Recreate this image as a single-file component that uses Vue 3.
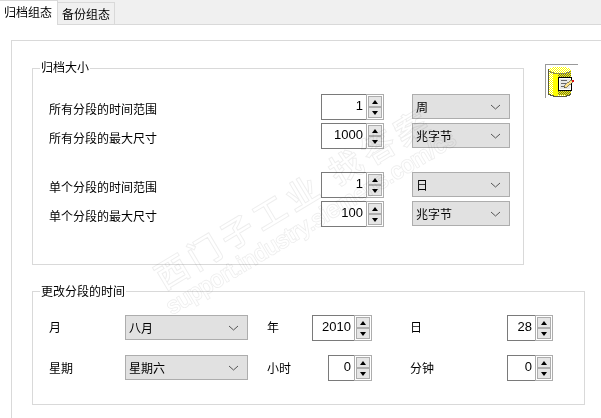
<template>
  <div class="page">
    <div class="tabs">
      <div class="tab active">归档组态</div>
      <div class="tab">备份组态</div>
    </div>

    <div class="panel">
      <div class="top-row">
        <section class="group group-size">
          <span class="legend">归档大小</span>
          <div v-for="(row, i) in sizeRows" :key="i" class="size-row" :class="{ spaced: i === 2 }">
            <span class="size-label">{{ row.label }}</span>
            <div class="spin" :style="{ width: '63px' }">
              <span class="spin-value">{{ row.value }}</span>
              <span class="spin-btns"><i class="up"></i><i class="down"></i></span>
            </div>
            <div class="combo combo-size">
              <span>{{ row.unit }}</span>
              <svg class="chev" width="11" height="6" viewBox="0 0 11 6" fill="none"><path d="M1 1L5.5 5L10 1" stroke="#555" stroke-width="1"/></svg>
            </div>
          </div>
        </section>

        <svg class="db-icon" width="34" height="34" viewBox="0 0 34 34" shape-rendering="crispEdges">
          <defs>
            <pattern id="dither" width="2" height="2" patternUnits="userSpaceOnUse">
              <rect width="2" height="2" fill="#ffff00"/>
              <rect width="1" height="1" fill="#6b6b3a"/>
              <rect x="1" y="1" width="1" height="1" fill="#6b6b3a"/>
            </pattern>
            <pattern id="dither-lt" width="2" height="2" patternUnits="userSpaceOnUse">
              <rect width="2" height="2" fill="#ffff00"/>
              <rect width="1" height="1" fill="#fff"/>
              <rect x="1" y="1" width="1" height="1" fill="#fff"/>
            </pattern>
          </defs>
          <path d="M0.5 34V0.5H33" fill="none" stroke="#9a9a9a" stroke-width="1"/>
          <path d="M3 5H5V4H8V3H21V4H24V5H26V29H24V31H21V32H8V31H5V30H3Z" fill="url(#dither-lt)"/>
          <rect x="8" y="10" width="5" height="22" fill="#ffff00"/>
          <rect x="13" y="9" width="13" height="22" fill="url(#dither)"/>
          <path d="M3 5H5V4H8V3H21V4H24V5H26V7H24V8H21V9H8V8H5V7H3Z" fill="url(#dither-lt)"/>
          <path d="M3 7V29M3 7H5V8H8V9H21V8H24V7H26" fill="none" stroke="#8a8a4a" stroke-width="1"/>
          <path d="M3.5 5V30H5.5V31.5H8.5V32.5H21V31.5H24V30H26" fill="none" stroke="#5a5a40" stroke-width="1"/>
          <rect x="13.5" y="13.5" width="13" height="13" fill="#fff" stroke="#000"/>
          <rect x="15" y="15" width="10" height="10" fill="#e8e8e8"/>
          <path d="M16 16.5H22M16 19.5H21M16 22.5H19" stroke="#666" fill="none"/>
          <path d="M19 24L20 21L26 16L28 18L22 23Z" fill="#ffe28a" stroke="#222" stroke-width="0.5"/>
          <rect x="27" y="16" width="2" height="2" fill="#e01010"/>
        </svg>
      </div>

      <section class="group group-time">
        <span class="legend">更改分段的时间</span>
        <div class="time-row">
          <span class="time-label">月</span>
          <div class="combo combo-time">
            <span>八月</span>
            <svg class="chev" width="11" height="6" viewBox="0 0 11 6" fill="none"><path d="M1 1L5.5 5L10 1" stroke="#555" stroke-width="1"/></svg>
          </div>
          <div class="pair pair-mid">
            <span>年</span>
            <div class="spin" :style="{ width: '60px' }">
              <span class="spin-value">2010</span>
              <span class="spin-btns"><i class="up"></i><i class="down"></i></span>
            </div>
          </div>
          <div class="pair pair-end">
            <span>日</span>
            <div class="spin" :style="{ width: '46px' }">
              <span class="spin-value">28</span>
              <span class="spin-btns"><i class="up"></i><i class="down"></i></span>
            </div>
          </div>
        </div>
        <div class="time-row">
          <span class="time-label">星期</span>
          <div class="combo combo-time">
            <span>星期六</span>
            <svg class="chev" width="11" height="6" viewBox="0 0 11 6" fill="none"><path d="M1 1L5.5 5L10 1" stroke="#555" stroke-width="1"/></svg>
          </div>
          <div class="pair pair-mid">
            <span>小时</span>
            <div class="spin" :style="{ width: '44px' }">
              <span class="spin-value">0</span>
              <span class="spin-btns"><i class="up"></i><i class="down"></i></span>
            </div>
          </div>
          <div class="pair pair-end">
            <span>分钟</span>
            <div class="spin" :style="{ width: '46px' }">
              <span class="spin-value">0</span>
              <span class="spin-btns"><i class="up"></i><i class="down"></i></span>
            </div>
          </div>
        </div>
      </section>
    </div>

    <div class="mark mark-cn">西门子工业 找答案</div>
    <div class="mark mark-url">support.industry.siemens.com/cs</div>
  </div>
</template>

<script setup>
const sizeRows = [
  { label: '所有分段的时间范围', value: 1, unit: '周' },
  { label: '所有分段的最大尺寸', value: 1000, unit: '兆字节' },
  { label: '单个分段的时间范围', value: 1, unit: '日' },
  { label: '单个分段的最大尺寸', value: 100, unit: '兆字节' }
];
</script>

<style>
html, body {
  margin: 0;
  background: #fff;
  overflow: hidden;
}
</style>

<style scoped>
.page {
  position: relative;
  width: 601px;
  height: 418px;
  overflow: hidden;
  background: #fff;
  color: #000;
  font: 12px/16px "Liberation Sans", "Noto Sans CJK SC", sans-serif;
}

.tabs {
  display: flex;
  align-items: flex-end;
  height: 24px;
  background: #f0f0f0;
  border-bottom: 1px solid #d9d9d9;
}
.tab {
  box-sizing: border-box;
  width: 57px;
  height: 23px;
  margin-bottom: -1px;
  padding: 4px 0 0 4px;
  border: 1px solid #d9d9d9;
  border-left: 0;
}
.tab.active {
  width: 58px;
  height: 25px;
  margin-bottom: -1px;
  padding: 4px 0 0 4px;
  background: #fff;
  border-bottom: 0;
}

.panel {
  margin: 15px 0 0 11px;
  padding: 23px 0 0 20px;
  height: 380px;
  border-left: 1px solid #d9d9d9;
  border-top: 1px solid #d9d9d9;
}
.top-row {
  display: flex;
  align-items: flex-start;
}

.group {
  position: relative;
  box-sizing: border-box;
  border: 1px solid #d9d9d9;
}
.legend {
  position: absolute;
  top: -9px;
  left: 7px;
  padding: 0 1px;
  background: #fff;
}
.group-time .legend {
  top: -8px;
}
.group-size {
  width: 492px;
  height: 197px;
  margin-top: 4px;
  padding: 25px 0 0 16px;
}
.group-time {
  width: 553px;
  height: 114px;
  margin-top: 26px;
  padding: 23px 0 0 16px;
}

.db-icon {
  margin-left: 21px;
  flex: none;
}

.size-row {
  display: flex;
  align-items: center;
  height: 26px;
  margin-bottom: 3px;
}
.size-row.spaced {
  margin-top: 23px;
}
.size-label {
  width: 272px;
  padding-top: 5px;
}

.spin {
  display: flex;
  box-sizing: border-box;
  height: 26px;
  flex: none;
  border: 1px solid #7a7a7a;
  border-right: 0;
  font-size: 13px;
}
.spin-value {
  flex: 1;
  padding: 3px 3px 0 0;
  text-align: right;
}
.spin-btns {
  display: flex;
  flex-direction: column;
  box-sizing: border-box;
  width: 18px;
  margin: -1px 0;
  padding: 1px;
  border: 1px solid #adadad;
  background: #fff;
}
.spin-btns i {
  position: relative;
  flex: 1;
  box-sizing: border-box;
  background: #e6e6e6;
  border: 1px solid #adadad;
}
.spin-btns i::after {
  content: "";
  position: absolute;
  left: 3px;
  border-left: 3.5px solid transparent;
  border-right: 3.5px solid transparent;
}
.spin-btns .up::after {
  top: 3px;
  border-bottom: 4px solid #000;
}
.spin-btns .down::after {
  top: 3px;
  border-top: 4px solid #000;
}

.combo {
  display: flex;
  align-items: center;
  justify-content: space-between;
  box-sizing: border-box;
  height: 25px;
  padding: 2px 8px 0 3px;
  flex: none;
  background: #e1e1e1;
  border: 1px solid #adadad;
}
.combo .chev {
  margin-top: -2px;
}
.combo-size {
  width: 98px;
  margin: -1px 0 0 28px;
}
.combo-time {
  width: 123px;
}

.time-row {
  display: flex;
  align-items: flex-start;
  height: 26px;
  margin-bottom: 14px;
}
.time-label {
  width: 76px;
  padding-top: 5px;
}
.time-row + .time-row .time-label {
  padding-top: 6px;
}
.pair {
  display: flex;
  justify-content: space-between;
  flex: none;
}
.pair > span {
  padding-top: 5px;
}
.time-row + .time-row .pair > span {
  padding-top: 6px;
}
.pair-mid {
  width: 105px;
  margin-left: 19px;
}
.pair-end {
  width: 143px;
  margin-left: 38px;
}

/* hollow outline: white fill over the stroke, multiply keeps what lies below */
.mark {
  position: absolute;
  color: #fff;
  white-space: pre;
  pointer-events: none;
  mix-blend-mode: multiply;
  paint-order: stroke fill;
  transform-origin: 0 50%;
  transform: rotate(-31deg);
}
.mark-cn {
  left: 157px;
  top: 258px;
  font: 400 32px/40px "Noto Sans CJK SC", sans-serif;
  letter-spacing: 6px;
  -webkit-text-stroke: 2px #eeeeee;
}
.mark-url {
  left: 168px;
  top: 294px;
  font: 400 23px/28px "Liberation Sans", sans-serif;
  -webkit-text-stroke: 1.7px #eeeeee;
}
</style>
